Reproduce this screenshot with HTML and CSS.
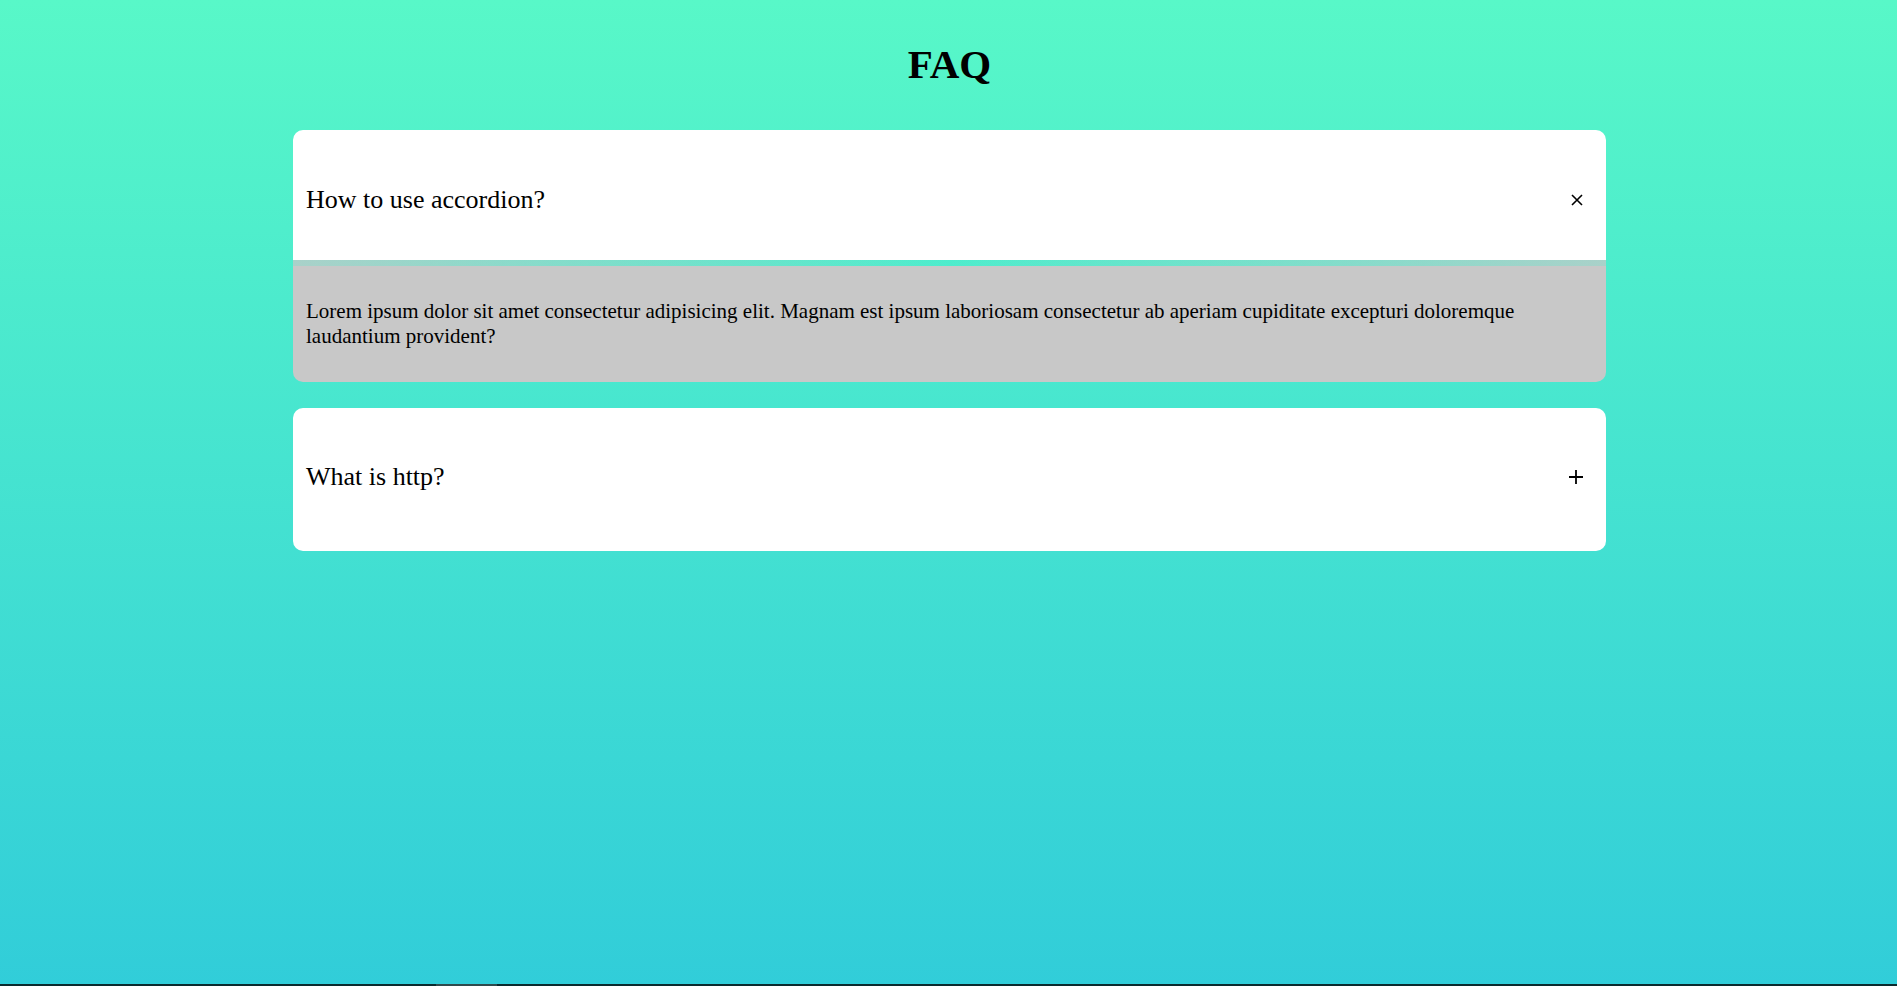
FILE: index.html
```html
<!DOCTYPE html>
<html lang="en">
<head>
<meta charset="utf-8">
<title>FAQ</title>
<link rel="stylesheet" href="styles.css">
</head>
<body>
<main class="page">
  <h1 class="title">FAQ</h1>
  <section class="faq">
    <article class="item item-open">
      <div class="question">
        <span class="question-text">How to use accordion?</span>
        <svg class="icon" width="14" height="14" viewBox="0 0 14 14" aria-hidden="true">
          <path d="M2 2 L12 12 M12 2 L2 12" stroke="#000" stroke-width="1.6" fill="none"/>
        </svg>
      </div>
      <div class="divider"></div>
      <div class="answer">
        <p>Lorem ipsum dolor sit amet consectetur adipisicing elit. Magnam est ipsum laboriosam consectetur ab aperiam cupiditate excepturi doloremque laudantium provident?</p>
      </div>
    </article>
    <article class="item item-closed">
      <div class="question">
        <span class="question-text">What is http?</span>
        <svg class="icon" width="16" height="16" viewBox="0 0 16 16" aria-hidden="true">
          <path d="M8 1 V15 M1 8 H15" stroke="#000" stroke-width="1.8" fill="none"/>
        </svg>
      </div>
    </article>
  </section>
</main>
<div class="bottom-strip"><span class="strip-thumb"></span></div>
</body>
</html>
```

FILE: styles.css
```css
html, body {
  margin: 0;
  padding: 0;
}

body {
  min-height: 100vh;
  background: linear-gradient(to bottom, #58f8c8 0%, #31cdd9 100%);
  font-family: "Liberation Serif", "Times New Roman", serif;
  color: #000;
}

.page {
  display: flex;
  flex-direction: column;
  align-items: center;
  padding-top: 41px;
  padding-left: 2px;
}

.title {
  margin: 0 0 43px;
  font-size: 41px;
  font-weight: bold;
  line-height: 46px;
}

.faq {
  width: 1313px;
  display: flex;
  flex-direction: column;
  gap: 26px;
}

.item {
  border-radius: 10px;
  overflow: hidden;
}

.question {
  background: #fff;
  display: flex;
  align-items: center;
  justify-content: space-between;
  padding: 54px 22px 0 13px;
  font-size: 26px;
  line-height: 30px;
  box-sizing: border-box;
}

.item-open .question {
  height: 130px;
  padding-top: 55px;
  padding-bottom: 45px;
}

.item-closed .question {
  height: 143px;
  padding-bottom: 59px;
}

.icon {
  display: block;
}

.divider {
  height: 6px;
  background: linear-gradient(90deg, rgba(200, 200, 200, 0.75) 0%, rgba(200, 200, 200, 0) 50%, rgba(200, 200, 200, 0.75) 100%);
}

.answer {
  background: #c8c8c8;
  height: 116px;
  display: flex;
  align-items: center;
  padding: 0 60px 0 13px;
}

.answer p {
  margin: 0;
  font-size: 21px;
  line-height: 25px;
}

.bottom-strip {
  position: fixed;
  left: 0;
  right: 0;
  bottom: 0;
  height: 2px;
  background: #0b2a2d;
}

.strip-thumb {
  position: absolute;
  left: 436px;
  width: 61px;
  top: 0;
  bottom: 0;
  background: #2f4a4c;
}
```
